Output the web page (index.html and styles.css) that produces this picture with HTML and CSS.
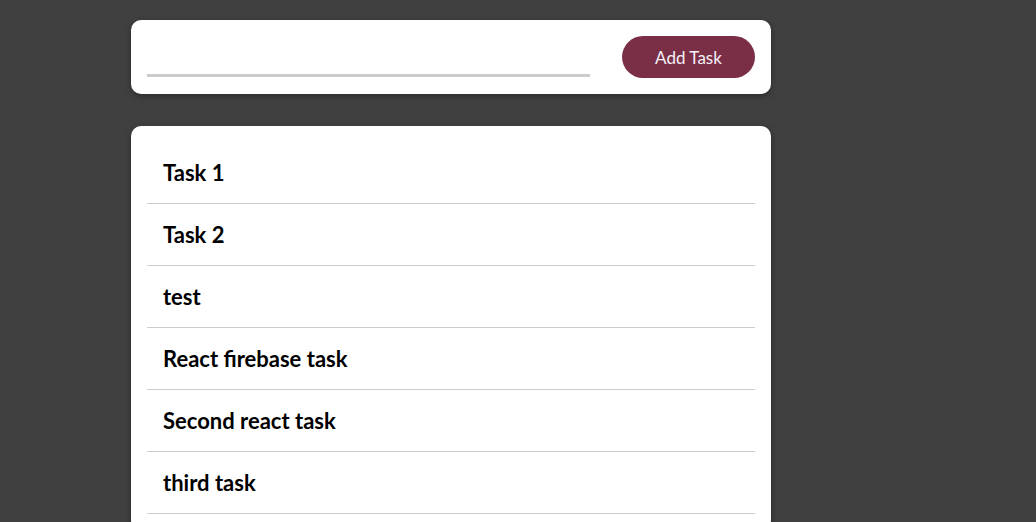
FILE: index.html
```html
<!DOCTYPE html>
<html>
<head>
<meta charset="utf-8">
<link rel="stylesheet" href="styles.css">
</head>
<body>
<div class="app">
  <form class="card add-form">
    <input class="task-input" type="text">
    <button class="add-btn" type="button">Add Task</button>
  </form>
  <div class="card list-card">
    <ul class="task-list">
      <li class="task">Task 1</li>
      <li class="task">Task 2</li>
      <li class="task">test</li>
      <li class="task">React firebase task</li>
      <li class="task">Second react task</li>
      <li class="task">third task</li>
    </ul>
  </div>
</div>
</body>
</html>
```
FILE: styles.css
```css
html, body {
  margin: 0;
  padding: 0;
  background: #404040;
  height: 100%;
  overflow: hidden;
}
body {
  font-family: Lato, "Open Sans", sans-serif;
}
.app {
  width: 640px;
  margin-left: 131px;
  padding-top: 20px;
  display: flex;
  flex-direction: column;
  gap: 32px;
}
.card {
  background: #fff;
  border-radius: 10px;
  box-shadow: 0 2px 6px rgba(0,0,0,0.35);
  padding: 16px;
}
.add-form {
  display: flex;
  align-items: flex-end;
  justify-content: space-between;
  margin: 0;
  padding-bottom: 16px;
}
.task-input {
  width: 443px;
  height: 38px;
  border: none;
  border-bottom: 3px solid #cccccc;
  outline: none;
  margin-bottom: 1px;
  padding: 0;
  font-size: 16px;
}
.add-btn {
  width: 133px;
  height: 42px;
  border: none;
  border-radius: 21px;
  background: #7b2f46;
  color: #f4f0f8;
  font-family: Lato, "Open Sans", sans-serif;
  font-size: 17px;
  padding-top: 2px;
}
.task-list {
  list-style: none;
  margin: 0;
  padding: 0;
}
.task {
  height: 61px;
  border-bottom: 1px solid #cccccc;
  padding-left: 16px;
  display: flex;
  align-items: center;
  font-size: 22px;
  font-weight: 700;
  color: #000;
}
```
